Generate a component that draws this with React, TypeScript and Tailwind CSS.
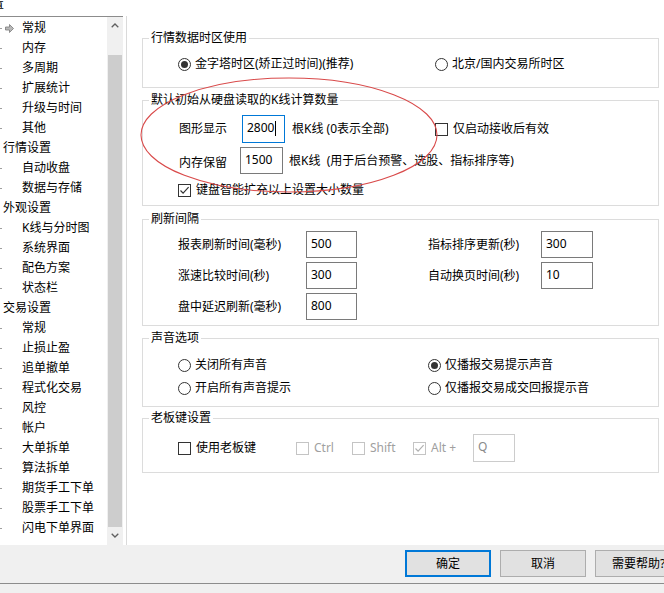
import React from 'react';

type TreeItem = { label: string; level: 1 | 2; active?: boolean };

const treeItems: TreeItem[] = [
  { label: '常规', level: 2, active: true },
  { label: '内存', level: 2 },
  { label: '多周期', level: 2 },
  { label: '扩展统计', level: 2 },
  { label: '升级与时间', level: 2 },
  { label: '其他', level: 2 },
  { label: '行情设置', level: 1 },
  { label: '自动收盘', level: 2 },
  { label: '数据与存储', level: 2 },
  { label: '外观设置', level: 1 },
  { label: 'K线与分时图', level: 2 },
  { label: '系统界面', level: 2 },
  { label: '配色方案', level: 2 },
  { label: '状态栏', level: 2 },
  { label: '交易设置', level: 1 },
  { label: '常规', level: 2 },
  { label: '止损止盈', level: 2 },
  { label: '追单撤单', level: 2 },
  { label: '程式化交易', level: 2 },
  { label: '风控', level: 2 },
  { label: '帐户', level: 2 },
  { label: '大单拆单', level: 2 },
  { label: '算法拆单', level: 2 },
  { label: '期货手工下单', level: 2 },
  { label: '股票手工下单', level: 2 },
  { label: '闪电下单界面', level: 2 },
];

const Radio = ({ checked, label }: { checked?: boolean; label: string }) => (
  <div className="flex items-center h-[20px]">
    <span className="w-[13px] h-[13px] rounded-full border border-[#333333] bg-white flex items-center justify-center">
      {checked && <span className="w-[7px] h-[7px] rounded-full bg-[#333333]" />}
    </span>
    <span className="ml-[4px]">{label}</span>
  </div>
);

const Check = ({ checked, label, disabled }: { checked?: boolean; label: string; disabled?: boolean }) => (
  <div className={`flex items-center h-[20px] ${disabled ? 'text-[#a0a0a0]' : 'text-black'}`}>
    <span
      className={`w-[13px] h-[13px] border bg-white flex items-center justify-center ${
        disabled ? 'border-[#c4c4c4]' : 'border-[#333333]'
      }`}
    >
      {checked && (
        <svg width="11" height="11" viewBox="0 0 11 11">
          <path
            d="M1.5 5.5l2.6 2.7L9.6 2.2"
            fill="none"
            stroke={disabled ? '#b0b0b0' : '#333333'}
            strokeWidth="1.2"
          />
        </svg>
      )}
    </span>
    <span className="ml-[5px]">{label}</span>
  </div>
);

const Field = ({
  value,
  className,
  focused,
  disabled,
}: {
  value: string;
  className: string;
  focused?: boolean;
  disabled?: boolean;
}) => (
  <div
    className={`flex items-center pl-[4px] pb-[2px] bg-white border ${className} ${
      focused ? 'border-[#0078d7]' : disabled ? 'border-[#cccccc] text-[#8a8a8a]' : 'border-[#7a7a7a]'
    }`}
  >
    <span>{value}</span>
    {focused && <span className="w-px h-[15px] bg-black ml-px" />}
  </div>
);

// group box: legend sits on the top border, padding goes on the inner wrapper
const Group = ({ title, className, children }: { title: string; className: string; children: React.ReactNode }) => (
  <fieldset className="border border-[#dcdcdc]">
    <legend className="ml-[6px] px-[2px] leading-[16px]">{title}</legend>
    <div className={className}>{children}</div>
  </fieldset>
);

const Chevron = ({ up }: { up?: boolean }) => (
  <svg width="8" height="5" viewBox="0 0 8 5">
    <path d={up ? 'M0.7 4.3L4 1l3.3 3.3' : 'M0.7 0.7L4 4l3.3-3.3'} fill="none" stroke="#606060" strokeWidth="1.3" />
  </svg>
);

export default function App() {
  return (
    <div className="relative w-[664px] h-[593px] overflow-hidden bg-white text-[12px] text-black font-['Noto_Sans','Noto_Sans_CJK_SC',sans-serif]">
      {/* cut-off title */}
      <div className="h-[16px] overflow-hidden">
        <span className="block w-[4px] overflow-hidden leading-[10px] -mt-[1px]">
          <span className="block -ml-[8px]">置</span>
        </span>
      </div>

      <div className="flex h-[529px]">
        {/* tree */}
        <div className="flex w-[123px] border-t border-[#8c8c8c]">
          <div className="w-[107px] pt-[1px] bg-white">
            {treeItems.map((item, i) => (
              <div key={i} className="relative flex items-center h-[20px] whitespace-nowrap">
                {item.level === 2 && <span className="absolute left-0 top-[10px] w-[2px] h-px bg-[#a0a0a0]" />}
                {item.active && (
                  <svg className="absolute left-[5px] top-[6px]" width="9" height="9" viewBox="0 0 9 9">
                    <path d="M0.5 3h4V0.5L8.5 4.5 4.5 8.5V6h-4z" fill="#b8b8b8" stroke="#7a7a7a" strokeWidth="0.8" />
                  </svg>
                )}
                <span className={item.level === 1 ? 'pl-[3px]' : 'pl-[22px]'}>{item.label}</span>
              </div>
            ))}
          </div>
          <div className="w-[16px] bg-[#f0f0f0] flex flex-col">
            <div className="h-[17px] flex items-center justify-center">
              <Chevron up />
            </div>
            <div className="h-[21px]" />
            <div className="mx-[1px] h-[472px] bg-[#cdcdcd]" />
            <div className="h-[17px] flex items-center justify-center">
              <Chevron />
            </div>
          </div>
        </div>
        <div className="w-[4px] border-r border-[#dadada]" />

        {/* content */}
        <div className="flex-1 pl-[15px] pr-[5px] pt-[14px] flex flex-col">
          <Group title="行情数据时区使用" className="pl-[35px] pt-[8px] pb-[13px]">
            <div className="flex">
              <div className="w-[257px]">
                <Radio checked label="金字塔时区(矫正过时间)(推荐)" />
              </div>
              <Radio label="北京/国内交易所时区" />
            </div>
          </Group>

          <div className="h-[4px]" />
          <Group title="默认初始从硬盘读取的K线计算数量" className="pl-[35px] pt-[7px] pb-[5px]">
            <div className="flex items-center h-[28px]">
              <div className="flex items-center w-[257px]">
                <span className="w-[64px] pl-[1px]">图形显示</span>
                <Field value="2800" focused className="w-[43px] h-[28px]" />
                <span className="ml-[7px] whitespace-pre">根K线 (0表示全部)</span>
              </div>
              <Check label="仅启动接收后有效" />
            </div>
            <div className="flex items-center h-[27px] mt-[4px]">
              <span className="w-[62px] pl-[1px] pt-[4px]">内存保留</span>
              <Field value="1500" className="w-[43px] h-[27px]" />
              <span className="ml-[6px] whitespace-pre">根K线  (用于后台预警、选股、指标排序等)</span>
            </div>
            <div className="mt-[6px]">
              <Check checked label="键盘智能扩充以上设置大小数量" />
            </div>
          </Group>

          <div className="h-[5px]" />
          <Group title="刷新间隔" className="pl-[35px] pt-[4px] pb-[5px]">
            <div className="grid grid-cols-[128px_51px_71px_113px_52px] gap-y-[4px] items-center">
              <span>报表刷新时间(毫秒)</span>
              <Field value="500" className="h-[27px]" />
              <span />
              <span>指标排序更新(秒)</span>
              <Field value="300" className="h-[27px]" />

              <span>涨速比较时间(秒)</span>
              <Field value="300" className="h-[27px]" />
              <span />
              <span>自动换页时间(秒)</span>
              <Field value="10" className="h-[27px]" />

              <span>盘中延迟刷新(毫秒)</span>
              <Field value="800" className="h-[27px]" />
            </div>
          </Group>

          <div className="h-[4px]" />
          <Group title="声音选项" className="pl-[35px] pt-[9px] pb-[8px]">
            <div className="flex">
              <div className="w-[250px]">
                <Radio label="关闭所有声音" />
              </div>
              <Radio checked label="仅播报交易提示声音" />
            </div>
            <div className="flex mt-[3px]">
              <div className="w-[250px]">
                <Radio label="开启所有声音提示" />
              </div>
              <Radio label="仅播报交易成交回报提示音" />
            </div>
          </Group>

          <div className="h-[3px]" />
          <Group title="老板键设置" className="pl-[35px] pt-[8px] pb-[10px]">
            <div className="flex items-center h-[28px]">
              <div className="w-[118px]">
                <Check label="使用老板键" />
              </div>
              <div className="w-[56px]">
                <Check disabled label="Ctrl" />
              </div>
              <div className="w-[61px]">
                <Check disabled label="Shift" />
              </div>
              <div className="w-[60px]">
                <Check disabled checked label="Alt +" />
              </div>
              <Field value="Q" disabled className="w-[42px] h-[28px]" />
            </div>
          </Group>
        </div>
      </div>

      {/* bottom buttons */}
      <div className="h-[39px] bg-[#f0f0f0] border-b border-[#8c8c8c] flex items-start pt-[5px] pl-[405px] gap-[9px]">
        <button className="shrink-0 w-[86px] h-[27px] bg-[#e1e1e1] border-2 border-[#0078d7]">确定</button>
        <button className="shrink-0 w-[86px] h-[27px] bg-[#e1e1e1] border border-[#adadad]">取消</button>
        <button className="shrink-0 w-[86px] h-[27px] bg-[#e1e1e1] border border-[#adadad] text-left pl-[16px] whitespace-nowrap">
          需要帮助?
        </button>
      </div>
      <div className="h-[9px] bg-[#f0f0f0]" />

      {/* hand-drawn red mark */}
      <svg className="absolute left-0 top-0 pointer-events-none" width="664" height="593">
        <ellipse cx="289" cy="135" rx="148" ry="57" fill="none" stroke="#d94a4a" strokeWidth="1.1" />
      </svg>
    </div>
  );
}
